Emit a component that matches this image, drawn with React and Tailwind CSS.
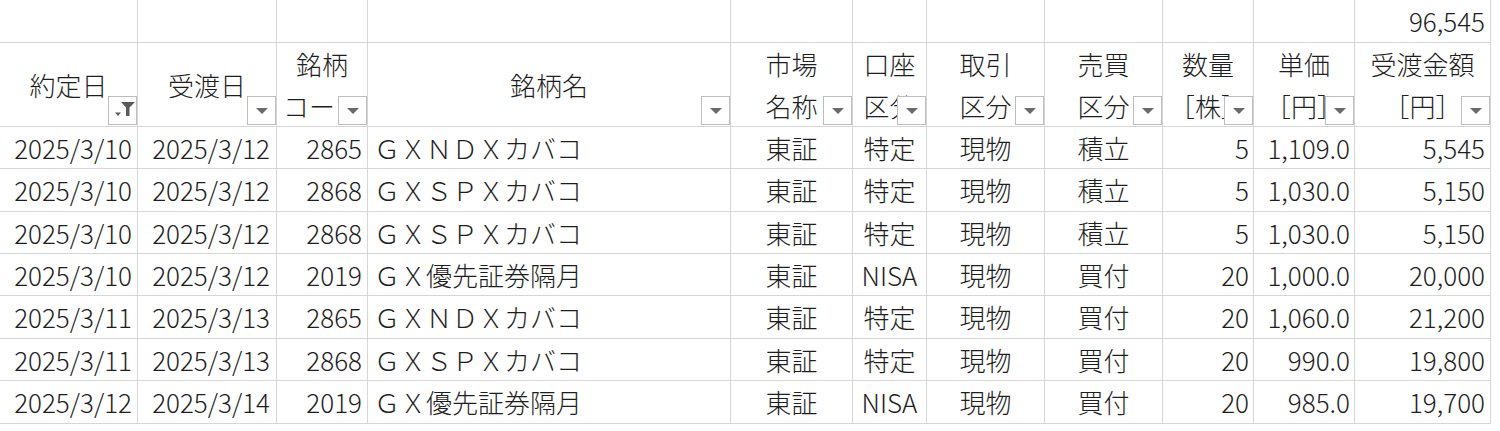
import React from "react";

// column config: header lines, alignment of data cells
const columns = [
  { head: ["約定日"], align: "justify-end pr-[5px]", filtered: true },
  { head: ["受渡日"], align: "justify-end pr-[6px]" },
  { head: ["銘柄", "コード"], align: "justify-end pr-[5px]" },
  { head: ["銘柄名"], align: "justify-start pl-[6px]" },
  { head: ["市場", "名称"], align: "justify-center" },
  { head: ["口座", "区分"], align: "justify-center" },
  { head: ["取引", "区分"], align: "justify-center" },
  { head: ["売買", "区分"], align: "justify-center" },
  { head: ["数量", "［株］"], align: "justify-end pr-[4px]" },
  { head: ["単価", "［円］"], align: "justify-end pr-[4px]" },
  { head: ["受渡金額", "［円］"], align: "justify-end pr-[5px]" },
];

const rows = [
  ["2025/3/10", "2025/3/12", "2865", "ＧＸＮＤＸカバコ", "東証", "特定", "現物", "積立", "5", "1,109.0", "5,545"],
  ["2025/3/10", "2025/3/12", "2868", "ＧＸＳＰＸカバコ", "東証", "特定", "現物", "積立", "5", "1,030.0", "5,150"],
  ["2025/3/10", "2025/3/12", "2868", "ＧＸＳＰＸカバコ", "東証", "特定", "現物", "積立", "5", "1,030.0", "5,150"],
  ["2025/3/10", "2025/3/12", "2019", "ＧＸ優先証券隔月", "東証", "NISA", "現物", "買付", "20", "1,000.0", "20,000"],
  ["2025/3/11", "2025/3/13", "2865", "ＧＸＮＤＸカバコ", "東証", "特定", "現物", "買付", "20", "1,060.0", "21,200"],
  ["2025/3/11", "2025/3/13", "2868", "ＧＸＳＰＸカバコ", "東証", "特定", "現物", "買付", "20", "990.0", "19,800"],
  ["2025/3/12", "2025/3/14", "2019", "ＧＸ優先証券隔月", "東証", "NISA", "現物", "買付", "20", "985.0", "19,700"],
];

const rowHeights = ["h-[42px]", "h-[43px]", "h-[42px]", "h-[42px]", "h-[43px]", "h-[42px]", "h-[43px]"];

const FilterButton = ({ filtered }) => (
  <div className="absolute right-0 bottom-[1px] w-[29px] h-[29px] border border-[#bdbdbd] bg-white flex items-center justify-center">
    {filtered ? (
      <svg width="27" height="27" viewBox="0 0 27 27" className="shrink-0">
        <path d="M12 5h14l-5.5 5.5V19h-3.5v-8.5z" fill="#5a5a5a" />
        <path d="M6 15.5h6l-3 3.5z" fill="#5a5a5a" />
      </svg>
    ) : (
      <svg width="12" height="6" viewBox="0 0 12 6">
        <path d="M0 0h12L6 6z" fill="#6a6a6a" />
      </svg>
    )}
  </div>
);

const App = () => {
  return (
    <div
      className="w-[1500px] h-[431px] bg-white text-[#1e1e1e] text-[26px] font-light overflow-hidden"
      style={{ fontFamily: '"Noto Sans CJK JP", "Noto Sans", sans-serif' }}
    >
      <div className="grid grid-cols-[138px_139px_91px_363px_122px_74px_118px_118px_91px_101px_136px] w-[1491px]">
        {/* top row, total only */}
        {columns.map((c, i) => (
          <div
            key={"t" + i}
            className="h-[43px] border-r border-b border-[#d6d6d6] flex items-center justify-end pr-[5px] leading-none"
          >
            {i === columns.length - 1 ? "96,545" : ""}
          </div>
        ))}

        {/* header row */}
        {columns.map((c, i) => (
          <div
            key={"h" + i}
            className="relative h-[84px] border-r border-b border-[#d6d6d6] flex flex-col items-center justify-center leading-[42px] whitespace-nowrap overflow-hidden"
          >
            {c.head.map((line) => (
              <span key={line}>{line}</span>
            ))}
            <FilterButton filtered={c.filtered} />
          </div>
        ))}

        {/* data rows */}
        {rows.map((r, ri) =>
          r.map((v, ci) => (
            <div
              key={ri + "-" + ci}
              className={`${rowHeights[ri]} border-r border-b border-[#d6d6d6] flex items-center whitespace-nowrap overflow-hidden leading-none ${columns[ci].align}`}
            >
              {v}
            </div>
          ))
        )}
      </div>
    </div>
  );
};

export default App;
